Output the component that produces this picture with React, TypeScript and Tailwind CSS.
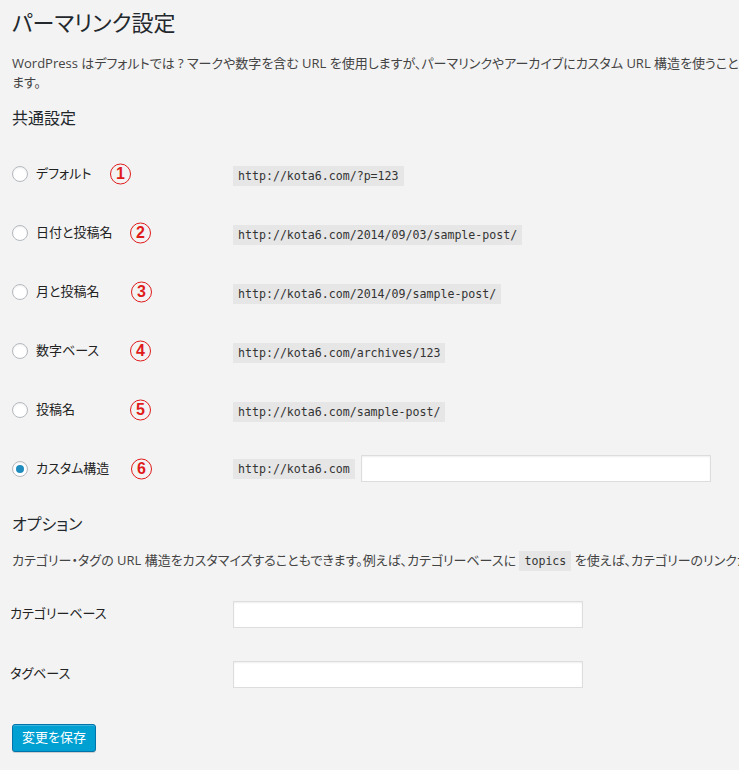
import React from 'react';

const font = { fontFamily: '"Open Sans", "Noto Sans CJK JP", sans-serif' };

const rows = [
  { label: 'デフォルト', url: 'http://kota6.com/?p=123', num: '1', left: 'left-[98px]' },
  { label: '日付と投稿名', url: 'http://kota6.com/2014/09/03/sample-post/', num: '2', left: 'left-[118px]' },
  { label: '月と投稿名', url: 'http://kota6.com/2014/09/sample-post/', num: '3', left: 'left-[119px]' },
  { label: '数字ベース', url: 'http://kota6.com/archives/123', num: '4', left: 'left-[118px]' },
  { label: '投稿名', url: 'http://kota6.com/sample-post/', num: '5', left: 'left-[118px]' },
];

function Code({ children }: { children: React.ReactNode }) {
  return (
    <code className="inline-block bg-[#e6e6e6] px-[5px] py-[2px] text-[11.6px] leading-[16px] text-[#333] font-['DejaVu_Sans_Mono',monospace]">
      {children}
    </code>
  );
}

function Radio({ checked }: { checked?: boolean }) {
  return (
    <span className="w-4 h-4 rounded-full border border-[#b4b9be] bg-white shadow-[inset_0_1px_2px_rgba(0,0,0,0.07)] flex items-center justify-center shrink-0">
      {checked && <span className="w-2 h-2 rounded-full bg-[#1e8cbe]" />}
    </span>
  );
}

function Mark({ n, left }: { n: string; left: string }) {
  return (
    <span
      className={`absolute ${left} top-1/2 -translate-y-1/2 w-[21px] h-[21px] rounded-full border-[1.5px] border-[#e01b1b] text-[#e01b1b] font-bold text-[16px] leading-none flex items-center justify-center font-['Liberation_Sans',sans-serif]`}
    >
      {n}
    </span>
  );
}

export default function App() {
  return (
    <main className="min-h-screen bg-[#f3f3f3] overflow-hidden text-[#444] [font-feature-settings:'palt']" style={font}>
      <div className="w-[1200px] pl-3 pt-2">
        <h1 className="text-[22px] leading-[29px] text-[#23282d]">パーマリンク設定</h1>

        <p className="mt-[17px] text-[13px] leading-[19px] whitespace-nowrap">
          WordPress はデフォルトでは ? マークや数字を含む URL を使用しますが、パーマリンクやアーカイブにカスタム URL 構造を使うこともでき
          <br />
          ます。
        </p>

        <h2 className="mt-[14px] text-[16px] leading-[24px] text-[#23282d]">共通設定</h2>

        <div className="mt-[14px]">
          {rows.map((r) => (
            <div key={r.num} className="h-[59px] grid grid-cols-[221px_1fr] items-center">
              <div className="relative flex items-center gap-2 h-full">
                <Radio />
                <span className="text-[13px] text-[#222]">{r.label}</span>
                <Mark n={r.num} left={r.left} />
              </div>
              <div>
                <Code>{r.url}</Code>
              </div>
            </div>
          ))}
          <div className="h-[59px] grid grid-cols-[221px_1fr] items-center">
            <div className="relative flex items-center gap-2 h-full">
              <Radio checked />
              <span className="text-[13px] text-[#222]">カスタム構造</span>
              <Mark n="6" left="left-[119px]" />
            </div>
            <div className="flex items-center gap-[6px]">
              <Code>http://kota6.com</Code>
              <input className="w-[350px] h-[27px] bg-white border border-[#ddd] shadow-[inset_0_1px_2px_rgba(0,0,0,0.07)] outline-none" />
            </div>
          </div>
        </div>

        <h2 className="mt-[14px] text-[16px] leading-[24px] text-[#23282d]">オプション</h2>

        <p className="mt-[15px] text-[13px] leading-[19px] whitespace-nowrap">
          カテゴリー・タグの URL 構造をカスタマイズすることもできます。例えば、カテゴリーベースに <Code>topics</Code>{' '}
          を使えば、カテゴリーのリンクが <Code>http://example.org/topics/uncategorized/</Code> のようになります。未入力の場合はデフォルト設定となります。
        </p>

        <div className="mt-[13px]">
          {['カテゴリーベース', 'タグベース'].map((l) => (
            <div key={l} className="h-[60px] grid grid-cols-[221px_1fr] items-center">
              <span className="text-[13px] text-[#222] -ml-[2px]">{l}</span>
              <div>
                <input className="w-[350px] h-[27px] bg-white border border-[#ddd] shadow-[inset_0_1px_2px_rgba(0,0,0,0.07)] outline-none" />
              </div>
            </div>
          ))}
        </div>

        <button className="mt-[20px] w-[84px] h-[28px] rounded-[3px] bg-[#00a0d2] border border-[#0073aa] text-white text-[13px] shadow-[inset_0_1px_0_rgba(120,200,230,0.5),0_1px_0_rgba(0,0,0,0.15)]">
          変更を保存
        </button>
      </div>
    </main>
  );
}
